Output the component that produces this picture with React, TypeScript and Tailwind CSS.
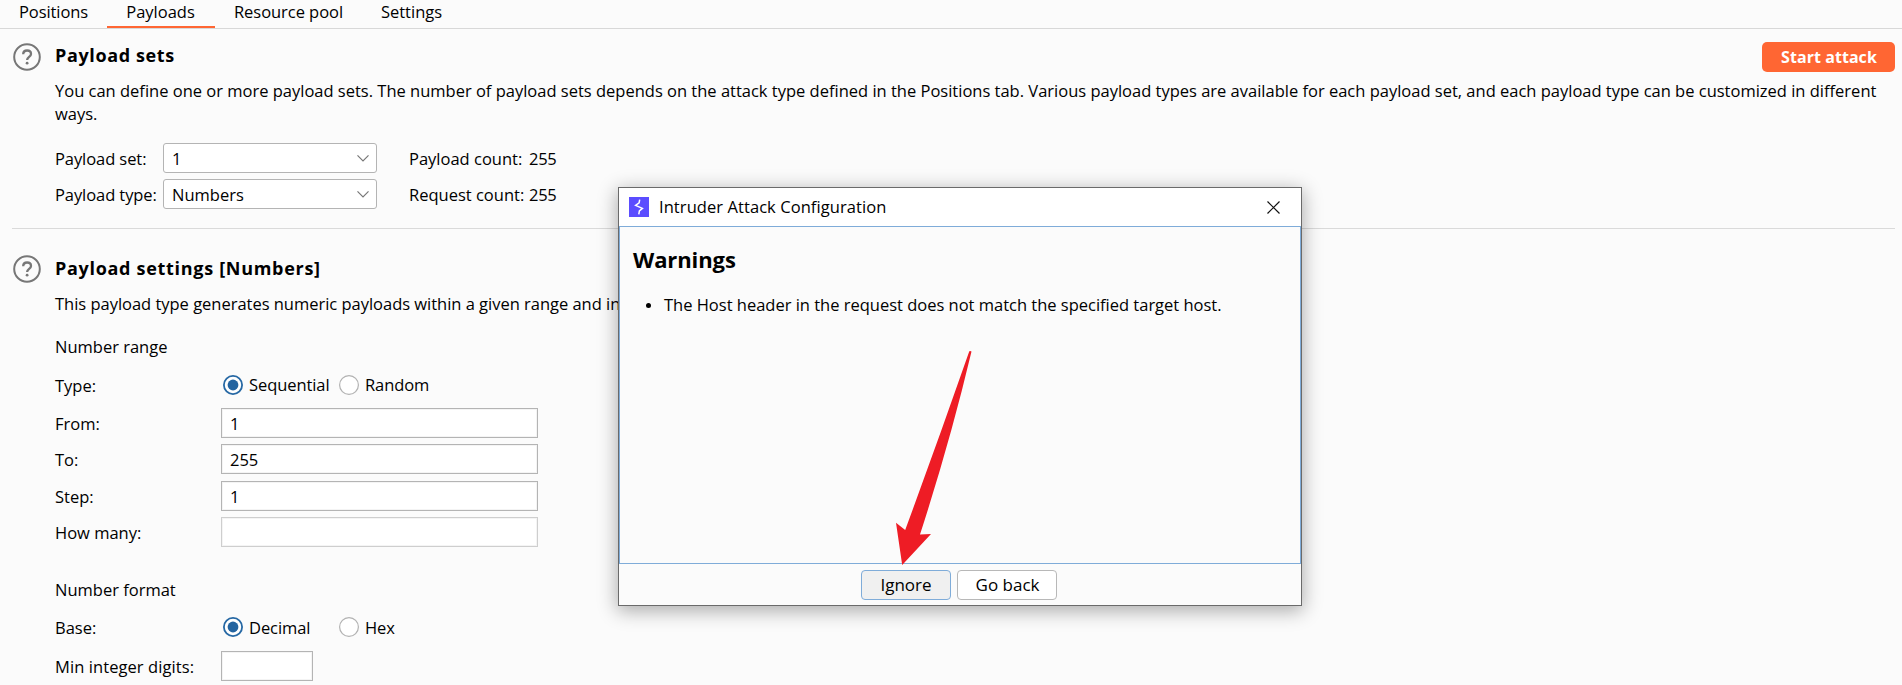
import React from "react";

function HelpIcon() {
  return (
    <svg className="block h-7 w-7 shrink-0" viewBox="0 0 28 28" fill="none" stroke="#777" strokeWidth="2">
      <circle cx="14" cy="14" r="12.800" />
      <path d="M10.200 11.200c0-2.300 1.500-3.700 3.900-3.700s3.900 1.400 3.900 3.400c0 2.800-3.900 3-3.900 6" strokeWidth="2.300" />
      <circle cx="14.100" cy="20.200" r="1.400" fill="#777" stroke="none" />
    </svg>
  );
}

function Tab({ label, className, active }: { label: string; className: string; active?: boolean }) {
  return (
    <div className={`relative flex h-[28px] items-start justify-center leading-[23px] ${className}`}>
      {label}
      {active && <div className="absolute bottom-0 left-0 h-[2px] w-full bg-[#ff6633]" />}
    </div>
  );
}

function Select({ value }: { value: string }) {
  return (
    <div className="flex h-[30px] w-[214px] items-center justify-between rounded-[3px] border border-[#b4b4b4] bg-white pr-[7px] pl-2">
      <span className="pt-px">{value}</span>
      <svg className="h-3 w-3" viewBox="0 0 12 12" fill="none" stroke="#777" strokeWidth="1.200">
        <path d="M0.500 3.300 L6 8.800 L11.500 3.300" />
      </svg>
    </div>
  );
}

function Field({ value, className = "w-[317px] border-[#b4b4b4]" }: { value?: string; className?: string }) {
  return (
    <div className={`flex h-[30px] items-center border bg-white pt-px pl-2 shadow-[inset_0_0_0_1px_#f4f4f4] ${className}`}>{value}</div>
  );
}

function Radio({ label, checked, className = "" }: { label: string; checked?: boolean; className?: string }) {
  return (
    <div className={`flex items-center ${className}`}>
      <svg className="mr-[5px] block h-[22px] w-[22px]" viewBox="0 0 22 22">
        <circle cx="11" cy="11" r={checked ? 9.1 : 9.4} fill="#fff" stroke={checked ? "#2668a4" : "#b2b2b2"} strokeWidth={checked ? 1.8 : 1.2} />
        {checked && <circle cx="11" cy="11" r="5.4" fill="#2464a0" />}
      </svg>
      <span className="tracking-[-0.080px]">{label}</span>
    </div>
  );
}

function Row({ label, children, className = "" }: { label: string; children: React.ReactNode; className?: string }) {
  return (
    <div className={`flex h-[30px] items-center ${className}`}>
      <span className="w-[166px] shrink-0 pt-px">{label}</span>
      {children}
    </div>
  );
}

function Dialog() {
  return (
    <div className="absolute top-[187px] left-[618px] flex h-[419px] w-[684px] flex-col border border-[#6a6a6a] bg-[#fbfbfb] shadow-[0_4px_18px_1px_rgba(0,0,0,0.32)]">
      <div className="flex h-[38px] shrink-0 items-center bg-white pr-[21.5px] pl-[10px]">
        <svg className="h-5 w-5 shrink-0" viewBox="0 0 20 20">
          <rect width="20" height="20" fill="#5b4dff" />
          <path d="M10.700 2.600 L10.100 5.800 L6.600 8.400 L13.400 11.400 L10.400 13.800 L9.800 17.400" fill="none" stroke="#fff" strokeWidth="1.500" />
        </svg>
        <span className="ml-[10px] pb-px tracking-[0.070px]">Intruder Attack Configuration</span>
        <svg className="ml-auto h-[13px] w-[13px]" viewBox="0 0 13 13" stroke="#111" strokeWidth="1.200">
          <path d="M0.500 0.500 L12.500 12.500 M12.500 0.500 L0.500 12.500" />
        </svg>
      </div>
      <div className="h-[338px] shrink-0 border border-[#7facd9] px-[13px] pt-[17px]">
        <h1 className="text-[22px] leading-[30px] font-bold tracking-[-0.100px]">Warnings</h1>
        <div className="mt-[19px] flex items-center">
          <span className="mt-[2px] ml-[13px] h-[5px] w-[5px] rounded-full bg-black" />
          <span className="ml-[13px] tracking-[-0.010px]">The Host header in the request does not match the specified target host.</span>
        </div>
      </div>
      <div className="flex grow items-center justify-center gap-[6px] pr-[2px] text-[17px]">
        <button className="h-[30px] w-[90px] rounded-[4px] border border-[#7facd9] bg-[#f0f0f0]">Ignore</button>
        <button className="h-[30px] w-[100px] rounded-[4px] border border-[#b8b8b8] bg-white pl-px">Go back</button>
      </div>
    </div>
  );
}

export default function App() {
  return (
    <div className="relative h-[685px] w-[1902px] overflow-hidden bg-[#fbfbfb] font-['Open_Sans','Noto_Sans',sans-serif] text-[16.5px] leading-[23px] text-black">
      <div className="flex h-[29px] border-b border-[#d8d8d8]">
        <Tab label="Positions" className="w-[107px] tracking-[-0.080px]" />
        <Tab label="Payloads" className="w-[108px] pr-px" active />
        <Tab label="Resource pool" className="w-[147px] tracking-[-0.050px]" />
        <Tab label="Settings" className="w-[100px] pr-px" />
      </div>

      <section className="ml-[12px] flex h-[200px] w-[1883px] border-b border-[#dadada] pt-[14px]">
        <div className="w-[43px] shrink-0 pl-px">
          <HelpIcon />
        </div>
        <div className="grow">
          <div className="flex items-start justify-between">
            <h2 className="text-[18px] leading-[25px] font-bold tracking-[0.620px]">Payload sets</h2>
            <button className="-mt-px h-[30px] w-[133px] rounded-[5px] bg-[#ff6633] pl-px text-[16px] font-bold tracking-[0.050px] text-white">Start attack</button>
          </div>
          <p className="mt-[7px] tracking-[-0.004px]">
            You can define one or more payload sets. The number of payload sets depends on the attack type defined in the Positions tab. Various payload types are available for each payload set, and each payload type can be customized in different ways.
          </p>
          <div className="mt-[18px] flex flex-col gap-[6px]">
            <div className="flex items-center">
              <span className="w-[108px] pt-px tracking-[-0.080px]">Payload set:</span>
              <Select value="1" />
              <span className="ml-[32px] w-[120px] pt-px">Payload count:</span>
              <span className="pt-px tracking-[-0.300px]">255</span>
            </div>
            <div className="flex items-center">
              <span className="w-[108px] pt-px tracking-[-0.080px]">Payload type:</span>
              <Select value="Numbers" />
              <span className="ml-[32px] w-[120px] pt-px">Request count:</span>
              <span className="pt-px tracking-[-0.300px]">255</span>
            </div>
          </div>
        </div>
      </section>

      <section className="ml-[12px] flex pt-[26px]">
        <div className="w-[43px] shrink-0 pl-px">
          <HelpIcon />
        </div>
        <div className="grow">
          <h2 className="pt-px text-[18px] leading-[25px] font-bold tracking-[0.700px]">Payload settings [Numbers]</h2>
          <p className="mt-[11px] tracking-[-0.020px]">This payload type generates numeric payloads within a given range and in</p>
          <h3 className="mt-[20px]">Number range</h3>
          <Row label="Type:" className="mt-[12px] pb-px">
            <Radio label="Sequential" checked className="ml-px w-[116px]" />
            <Radio label="Random" />
          </Row>
          <Row label="From:" className="mt-[8px]"><Field value="1" /></Row>
          <Row label="To:" className="mt-[6px]"><Field value="255" /></Row>
          <Row label="Step:" className="mt-[7px]"><Field value="1" /></Row>
          <Row label="How many:" className="mt-[6px]"><Field className="w-[317px] border-[#cecece]" /></Row>
          <h3 className="mt-[31px]">Number format</h3>
          <Row label="Base:" className="mt-[11px]">
            <Radio label="Decimal" checked className="ml-px w-[116px]" />
            <Radio label="Hex" />
          </Row>
          <Row label="Min integer digits:" className="mt-[9px] tracking-[0.080px]"><Field className="w-[92px] border-[#b4b4b4]" /></Row>
        </div>
      </section>

      <Dialog />

      <svg className="absolute top-[349px] left-[894px] h-[218px] w-[80px]" viewBox="894 349 80 218">
        <path d="M969.300 351.300 Q970.300 350.600 971.500 351.500 Q950 442 920 534.500 L931 534 L902.200 565 L896 522.800 L905.200 530 Q938 441 969.300 351.300Z" fill="#ee1c25" />
      </svg>
    </div>
  );
}
